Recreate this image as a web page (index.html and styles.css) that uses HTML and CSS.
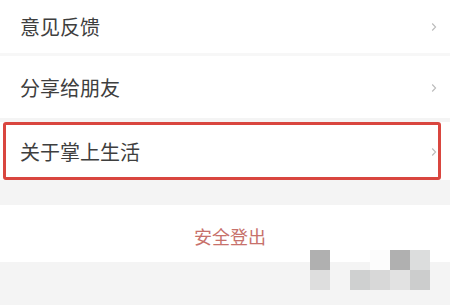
FILE: index.html
```
<!DOCTYPE html>
<html lang="zh-CN">
<head>
<meta charset="utf-8">
<link rel="stylesheet" href="styles.css">
</head>
<body>
<div class="page">
  <div class="group">
    <div class="row row-1"><span class="label">意见反馈</span><span class="chev"><svg width="6" height="10" viewBox="0 0 6 10"><path d="M1.2 1.5 L4.6 5 L1.2 8.5" fill="none" stroke="#bbbbbb" stroke-width="1.1"/></svg></span></div>
    <div class="row row-2"><span class="label">分享给朋友</span><span class="chev"><svg width="6" height="10" viewBox="0 0 6 10"><path d="M1.2 1.5 L4.6 5 L1.2 8.5" fill="none" stroke="#bbbbbb" stroke-width="1.1"/></svg></span></div>
  </div>
  <div class="row row-3"><span class="label">关于掌上生活</span><span class="chev"><svg width="6" height="10" viewBox="0 0 6 10"><path d="M1.2 1.5 L4.6 5 L1.2 8.5" fill="none" stroke="#bbbbbb" stroke-width="1.1"/></svg></span><div class="mark"></div></div>
  <div class="logout">安全登出</div>
  <div class="pixels">
    <i style="left:310px;top:250px;background:#b0b0b0"></i>
    <i style="left:370px;top:250px;background:#fcfcfc"></i>
    <i style="left:390px;top:250px;background:#b0b0b0"></i>
    <i style="left:410px;top:250px;background:#dcdddd"></i>
    <i style="left:310px;top:270px;background:#dedede"></i>
    <i style="left:350px;top:270px;background:#cfd0d0"></i>
    <i style="left:370px;top:270px;background:#d8d8d8"></i>
    <i style="left:390px;top:270px;background:#e2e2e2"></i>
    <i style="left:410px;top:270px;background:#cccdcd"></i>
  </div>
</div>
</body>
</html>
```
FILE: styles.css
```
html, body {
  margin: 0;
  padding: 0;
}
body {
  width: 450px;
  height: 305px;
  overflow: hidden;
  background: #f4f4f4;
  font-family: "Noto Sans CJK SC", "Noto Sans", sans-serif;
}
.page {
  position: relative;
  width: 450px;
  height: 305px;
  display: flex;
  flex-direction: column;
}
.group {
  display: flex;
  flex-direction: column;
  gap: 3px;
  background: #f7f7f7;
}
.row {
  position: relative;
  display: flex;
  align-items: center;
  justify-content: space-between;
  background: #fff;
  padding: 0 13px 0 20px;
  box-sizing: border-box;
}
.row-1 { height: 53px; }
.row-2 { height: 62px; padding-top: 2px; }
.row-3 { height: 58px; margin-top: 4px; padding-top: 2px; }
.label {
  font-size: 20px;
  color: #3e3e3e;
  line-height: 1;
}
.chev {
  display: flex;
  width: 6px;
  height: 10px;
}
.mark {
  position: absolute;
  left: 3px;
  top: 0;
  width: 438px;
  height: 58px;
  box-sizing: border-box;
  border: 3px solid #d9463f;
  border-radius: 3px;
}
.logout {
  margin-top: 25px;
  height: 57px;
  background: #fff;
  display: flex;
  align-items: center;
  justify-content: center;
  padding-top: 4px;
  padding-left: 10px;
  box-sizing: border-box;
  font-size: 18px;
  color: #c7716b;
}
.pixels i {
  position: absolute;
  width: 20px;
  height: 20px;
}
```
